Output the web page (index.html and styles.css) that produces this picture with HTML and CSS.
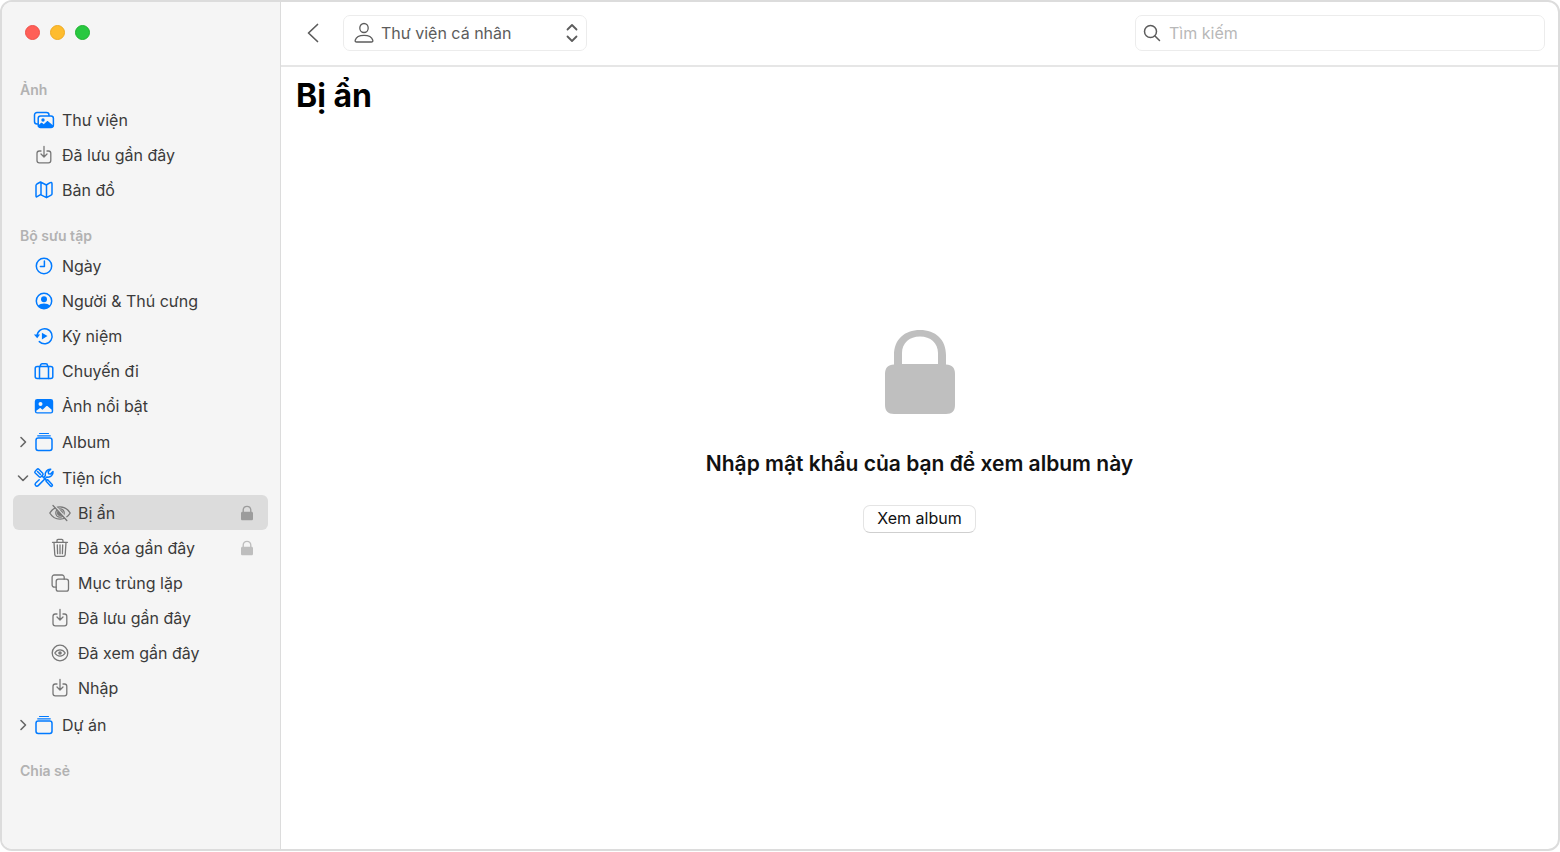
FILE: index.html
```
<!DOCTYPE html>
<html lang="vi">
<head>
    <meta charset="UTF-8">
    <meta name="viewport" content="width=device-width, initial-scale=1.0">
    <title>Bị ẩn</title>
    <link rel="stylesheet" href="styles.css">
</head>
<body>

<!-- icon set -->
<svg class="sprite" aria-hidden="true">
    <symbol id="i-library" viewBox="0 0 22 22">
        <path d="M4.500 15H4a2.500 2.500 0 0 1-2.500-2.500V6A2.500 2.500 0 0 1 4 3.500h9.500A2.500 2.500 0 0 1 16 6v.5"/>
        <rect x="5.200" y="6.900" width="15.200" height="11.600" rx="2.400"/>
        <circle class="fill" cx="10" cy="11" r="1.700"/>
        <path class="fill" d="M5.500 16.300l2.400-2.300c.5-.4.900-.4 1.400 0l1.400 1.200 3-2.800c.5-.5 1.100-.5 1.600 0l4.900 4c0 1.300-.8 2.100-2 2.100H8c-1.500 0-2.500-.9-2.500-2.200z"/>
    </symbol>
    <symbol id="i-import" viewBox="0 0 22 22">
        <path d="M8 7H6.300A2.300 2.300 0 0 0 4 9.300v7.200a2.300 2.300 0 0 0 2.300 2.300h9.200a2.300 2.300 0 0 0 2.300-2.300V9.300A2.300 2.300 0 0 0 15.500 7H14M11 2.500v10.300M8 10l3 3 3-3"/>
    </symbol>
    <symbol id="i-map" viewBox="0 0 22 22">
        <path d="M3 6.500c0-.7.3-1.100.9-1.500l3.600-2 5.800 3 3.400-2.200c1.400-.7 2.300-.3 2.300 1v9.900c0 .7-.3 1.200-.9 1.500l-4.600 2.500-6-3-3.400 2c-.7.4-1.100.1-1.100-.7zM8 3.300v12.400M13.500 6v12.500"/>
    </symbol>
    <symbol id="i-clock" viewBox="0 0 22 22">
        <circle cx="11" cy="11" r="7.700"/>
        <path d="M11.400 6v5.400H7.400"/>
    </symbol>
    <symbol id="i-people" viewBox="0 0 22 22">
        <circle cx="11" cy="11" r="7.700"/>
        <circle class="fill" cx="11" cy="9.300" r="3"/>
        <path class="fill" d="M5 15.800c1.500-1.500 3.500-2.200 6-2.200s4.500.7 6 2.200c-1.500 2-3.500 3-6 3s-4.500-1-6-3z"/>
    </symbol>
    <symbol id="i-memories" viewBox="0 0 22 22">
        <path d="M4.100 11a7.500 7.500 0 1 1 2.200 5.600"/>
        <path class="fill" d="M.9 9.500h6.200L4.200 13.200zM8.900 7.800v6.600l5.600-3.300z"/>
    </symbol>
    <symbol id="i-trips" viewBox="0 0 22 22">
        <rect x="2.200" y="6.500" width="17.600" height="12" rx="2"/>
        <path d="M6.500 6.500v12M15.500 6.500v12M7.500 6.500v-1A1.700 1.700 0 0 1 9.200 3.800h3.600a1.700 1.700 0 0 1 1.700 1.700v1"/>
    </symbol>
    <symbol id="i-photo" viewBox="0 0 22 22">
        <path class="fill" fill-rule="evenodd" d="M4.200 4h13.600a2.400 2.400 0 0 1 2.400 2.400v9.800a2.400 2.400 0 0 1-2.400 2.400H4.200a2.400 2.400 0 0 1-2.400-2.400V6.400A2.400 2.400 0 0 1 4.200 4zM7.500 7a2 2 0 1 0 0 4 2 2 0 0 0 0-4zM3.300 15.800v.5c0 .7.300 1 1 1h13.400c.7 0 1-.3 1-1v-1.500l-4-3.500c-.5-.4-1-.4-1.500 0L9.500 14.800l-1.600-1.400c-.5-.4-1-.4-1.500 0z"/>
    </symbol>
    <symbol id="i-album" viewBox="0 0 22 22">
        <rect x="3" y="7" width="16" height="12.500" rx="2.200"/>
        <path d="M4.700 4.800h12.600M6.500 2.500h9" class="thin"/>
    </symbol>
    <symbol id="i-tools" viewBox="0 0 22 22">
        <path d="M2.200 4.300l1.900-2c.5-.5 1.200-.5 1.700 0l3.900 4c.6.700.6 1.200 0 1.800L8 9.800c-.6.6-1.200.6-1.800 0L2.200 6c-.5-.5-.5-1.200 0-1.700zM4.500 4.500l3 3M9.500 9.500l4 4M13 14c.2-.9.800-1.300 1.700-1.200l4.400 4.600c.5.600.5 1.100 0 1.600s-1 .5-1.600 0z"/>
        <path d="M12.300 8.800c-.4-2 0-3.600 1.200-4.900C14.700 2.600 16.100 2 17.700 2.200L15.200 4.800l.4 1.900 1.900.4 2.500-2.500c.2 1.700-.4 3.100-1.500 4.200-1.300 1.200-2.800 1.600-4.700 1.200l-8.600 8.600c-.8.8-1.900.8-2.600 0s-.7-1.800.1-2.600l3.500-3.200M11 10.100l1.300-1.300"/>
    </symbol>
    <symbol id="i-hidden" viewBox="0 0 22 22">
        <path d="M.8 11C3 7.300 6.700 4.800 11 4.800S19 7.300 21.200 11C19 14.700 15.300 17.200 11 17.200S3 14.700 .8 11z"/>
        <circle cx="11" cy="11" r="4.200"/>
        <circle class="fill" cx="11" cy="11" r="3"/>
        <path class="knock" d="M5.200 3.200L18.500 17.500"/>
        <path d="M4 3.500L17.800 18.500"/>
    </symbol>
    <symbol id="i-trash" viewBox="0 0 22 22">
        <path d="M3.500 5.300h15M8 5V3.700C8 2.900 8.400 2.400 9.200 2.400h3.600c.8 0 1.200.5 1.200 1.300V5M5 5.500l.8 12.100c.1 1.200.7 1.800 1.900 1.800h6.600c1.200 0 1.800-.6 1.900-1.800L17 5.500M8.300 8l.3 8.700M11 8v8.700M13.700 8l-.3 8.700"/>
    </symbol>
    <symbol id="i-copies" viewBox="0 0 22 22">
        <rect x="7.200" y="7.200" width="12.300" height="12" rx="2.200"/>
        <path d="M7.200 15.200H5.300A2.200 2.200 0 0 1 3.100 13V5.200A2.200 2.200 0 0 1 5.300 3H13a2.200 2.200 0 0 1 2.200 2.200v2"/>
    </symbol>
    <symbol id="i-viewed" viewBox="0 0 22 22">
        <circle cx="11" cy="11" r="7.800"/>
        <path d="M5.800 11c1.300-2 3-3.100 5.200-3.100s3.900 1.100 5.200 3.100c-1.300 2-3 3.100-5.200 3.100S7.100 13 5.800 11z"/>
        <circle class="fill" cx="11" cy="11" r="1.800"/>
    </symbol>
    <symbol id="i-lock" viewBox="0 0 70 84">
        <path class="fill" fill-rule="evenodd" d="M9 34.500V25C9 9.500 19.500 0 35 0s26 9.500 26 25v9.500c6 0 9 3.500 9 9.500v31c0 6-3 9-9 9H9c-6 0-9-3-9-9V44c0-6 3-9.500 9-9.500zM17 34h36V23C53 13 45.500 6.500 35 6.500S17 13 17 23z"/>
    </symbol>
    <symbol id="i-person" viewBox="0 0 22 22">
        <ellipse cx="11" cy="6" rx="4.200" ry="4.500"/>
        <path d="M3.700 20c-1.200 0-1.800-.6-1.500-1.700.9-3 4.300-4.900 8.800-4.900s7.900 1.900 8.800 4.900c.3 1.100-.3 1.700-1.500 1.700z"/>
    </symbol>
    <symbol id="i-updown" viewBox="0 0 12 22">
        <path d="M1.500 7.500L6 3l4.500 4.500M1.500 14.500L6 19l4.500-4.500"/>
    </symbol>
    <symbol id="i-back" viewBox="0 0 14 22">
        <path d="M11.500 2.500L2.500 11l9 8.500"/>
    </symbol>
    <symbol id="i-search" viewBox="0 0 20 20">
        <circle cx="8.500" cy="8.500" r="6"/>
        <path d="M13 13l4.500 4.500"/>
    </symbol>
    <symbol id="i-chevron" viewBox="0 0 12 12">
        <path d="M4 1.500L8.500 6 4 10.500"/>
    </symbol>
</svg>

<div class="window">

    <nav class="sidebar" aria-label="Thanh bên">
        <div class="lights">
            <button class="light close" aria-label="Đóng"></button>
            <button class="light minimize" aria-label="Thu nhỏ"></button>
            <button class="light zoom" aria-label="Phóng to"></button>
        </div>

        <h2>Ảnh</h2>
        <ul>
            <li class="row"><a href="#"><svg class="icon"><use href="#i-library"/></svg>Thư viện</a></li>
            <li class="row"><a href="#"><svg class="icon gray"><use href="#i-import"/></svg>Đã lưu gần đây</a></li>
            <li class="row"><a href="#"><svg class="icon"><use href="#i-map"/></svg>Bản đồ</a></li>
        </ul>

        <h2>Bộ sưu tập</h2>
        <ul>
            <li class="row"><a href="#"><svg class="icon"><use href="#i-clock"/></svg>Ngày</a></li>
            <li class="row"><a href="#"><svg class="icon"><use href="#i-people"/></svg>Người &amp; Thú cưng</a></li>
            <li class="row"><a href="#"><svg class="icon"><use href="#i-memories"/></svg>Kỷ niệm</a></li>
            <li class="row"><a href="#"><svg class="icon"><use href="#i-trips"/></svg>Chuyến đi</a></li>
            <li class="row"><a href="#"><svg class="icon"><use href="#i-photo"/></svg>Ảnh nổi bật</a></li>
            <li class="group">
                <div class="row">
                    <button class="toggle" aria-expanded="false" aria-label="Mở Album"><svg><use href="#i-chevron"/></svg></button>
                    <a href="#"><svg class="icon"><use href="#i-album"/></svg>Album</a>
                </div>
            </li>
            <li class="group">
                <div class="row">
                    <button class="toggle" aria-expanded="true" aria-label="Đóng Tiện ích"><svg><use href="#i-chevron"/></svg></button>
                    <a href="#"><svg class="icon"><use href="#i-tools"/></svg>Tiện ích</a>
                </div>
                <ul class="sub">
                    <li class="row selected"><a href="#" aria-current="page"><svg class="icon gray"><use href="#i-hidden"/></svg>Bị ẩn<svg class="lock"><use href="#i-lock"/></svg></a></li>
                    <li class="row"><a href="#"><svg class="icon gray"><use href="#i-trash"/></svg>Đã xóa gần đây<svg class="lock"><use href="#i-lock"/></svg></a></li>
                    <li class="row"><a href="#"><svg class="icon gray"><use href="#i-copies"/></svg>Mục trùng lặp</a></li>
                    <li class="row"><a href="#"><svg class="icon gray"><use href="#i-import"/></svg>Đã lưu gần đây</a></li>
                    <li class="row"><a href="#"><svg class="icon gray"><use href="#i-viewed"/></svg>Đã xem gần đây</a></li>
                    <li class="row"><a href="#"><svg class="icon gray"><use href="#i-import"/></svg>Nhập</a></li>
                </ul>
            </li>
            <li class="group">
                <div class="row">
                    <button class="toggle" aria-expanded="false" aria-label="Mở Dự án"><svg><use href="#i-chevron"/></svg></button>
                    <a href="#"><svg class="icon"><use href="#i-album"/></svg>Dự án</a>
                </div>
            </li>
        </ul>

        <h2>Chia sẻ</h2>
    </nav>

    <div class="content">
        <header class="toolbar">
            <button class="back" aria-label="Quay lại"><svg><use href="#i-back"/></svg></button>
            <div class="field library">
                <svg class="person"><use href="#i-person"/></svg>
                <select aria-label="Thư viện">
                    <option>Thư viện cá nhân</option>
                </select>
                <svg class="updown"><use href="#i-updown"/></svg>
            </div>
            <label class="field search">
                <svg><use href="#i-search"/></svg>
                <input type="search" placeholder="Tìm kiếm" aria-label="Tìm kiếm">
            </label>
        </header>

        <main>
            <h1>Bị ẩn</h1>
            <div class="locked">
                <svg class="big-lock"><use href="#i-lock"/></svg>
                <p>Nhập mật khẩu của bạn để xem album này</p>
                <button class="view">Xem album</button>
            </div>
        </main>
    </div>

</div>

</body>
</html>
```
FILE: styles.css
```
* {
    box-sizing: border-box;
}
body {
    margin: 0;
    padding-bottom: 1px;
    background-color: #fff;
    color: #3b3b3b;
    font-family: Inter, "Noto Sans", sans-serif;
    font-size: 16px;
    line-height: 20px;
}
ul {
    list-style: none;
    margin: 0;
    padding: 0;
}
button, select, input {
    font: inherit;
    color: inherit;
    background: none;
    border: none;
    margin: 0;
    padding: 0;
}
svg {
    display: block;
    flex: none;
    fill: none;
    stroke: currentColor;
    stroke-width: 1.5;
    stroke-linecap: round;
    stroke-linejoin: round;
}
.sprite {
    position: absolute;
    width: 0;
    height: 0;
}
.fill {
    fill: currentColor;
    stroke: none;
}
.thin {
    stroke-width: 1.2;
}
.knock {
    stroke: #dcdcdc;
    stroke-width: 1.6;
}
.window {
    display: flex;
    min-height: calc(100vh - 1px);
    border: 2px solid #dcdcdc;
    border-radius: 12px;
    overflow: hidden;
}

/* sidebar */
.sidebar {
    flex: none;
    width: 279px;
    padding: 23px 12px 24px 11px;
    background-color: #f5f5f5;
    border-right: 1px solid #dcdcdc;
}
.lights {
    display: flex;
    gap: 10px;
    padding-left: 12px;
    margin-bottom: 40px;
}
.light {
    width: 15px;
    height: 15px;
    border-radius: 50%;
}
.close {
    background-color: #ff5f57;
    border: 1px solid #ee514a;
}
.minimize {
    background-color: #febc2e;
    border: 1px solid #eeaa22;
}
.zoom {
    background-color: #28c840;
    border: 1px solid #1fb32f;
}
.sidebar h2 {
    margin: 0;
    padding: 0 7px 2px;
    font-size: 14px;
    font-weight: 600;
    line-height: 20px;
    color: #b2b2b2;
}
.sidebar ul + h2 {
    margin-top: 19px;
}
.row {
    display: flex;
    align-items: center;
    height: 35px;
    padding-left: 20px;
    border-radius: 6px;
}
.row a {
    flex: 1;
    display: flex;
    align-items: center;
    gap: 7px;
    color: inherit;
    text-decoration: none;
}
.group {
    margin-top: 1px;
}
.group > .row {
    padding-left: 4px;
}
.sub {
    padding-bottom: 1px;
}
.sub .row {
    padding-left: 36px;
}
.selected {
    background-color: #dcdcdc;
}
.icon {
    width: 22px;
    height: 22px;
    color: #007aff;
}
.icon.gray {
    color: #777;
    stroke-width: 1.3;
}
.lock {
    width: 12px;
    height: 16px;
    margin-left: auto;
    margin-right: 15px;
    color: #bebebe;
}
.selected .lock {
    color: #9c9c9c;
}
.toggle {
    width: 12px;
    height: 12px;
    margin-right: 4px;
    color: #666;
}
.toggle svg {
    width: 12px;
    height: 12px;
    stroke-width: 1.6;
}
.toggle[aria-expanded="true"] svg {
    transform: rotate(90deg);
}

/* main area */
.content {
    flex: 1;
    display: flex;
    flex-direction: column;
    min-width: 0;
}
.toolbar {
    display: flex;
    align-items: center;
    height: 65px;
    padding: 0 13px 2px 25px;
    border-bottom: 2px solid #e6e6e6;
    color: #5c5c5c;
}
.back {
    margin-right: 23px;
}
.back svg {
    width: 14px;
    height: 22px;
    stroke-width: 1.7;
}
.field {
    display: flex;
    align-items: center;
    height: 36px;
    border: 1px solid #ececec;
    border-radius: 7px;
}
.library {
    width: 244px;
    padding: 0 8px 0 9px;
}
.person {
    width: 22px;
    height: 22px;
    margin-right: 6px;
    stroke-width: 1.3;
}
.library select {
    flex: 1;
    min-width: 0;
    appearance: none;
    outline: none;
}
.updown {
    width: 12px;
    height: 22px;
    stroke-width: 1.8;
}
.search {
    flex: 0 1 410px;
    margin-left: auto;
    padding: 0 6px;
}
.search svg {
    width: 20px;
    height: 20px;
    margin-right: 7px;
}
.search input {
    flex: 1;
    min-width: 0;
    outline: none;
}
.search input::placeholder {
    color: #b8b8b8;
}
main {
    flex: 1;
    display: flex;
    flex-direction: column;
}
h1 {
    margin: 0;
    padding: 9px 15px;
    font-size: 32px;
    font-weight: 700;
    line-height: 40px;
    color: #000;
}
.locked {
    flex: 1;
    display: flex;
    flex-direction: column;
    align-items: center;
    justify-content: center;
    padding-bottom: 112px;
    color: #111;
}
.big-lock {
    width: 70px;
    height: 84px;
    color: #bfbfbf;
}
.locked p {
    margin: 35px 16px 26px;
    font-size: 21px;
    font-weight: 600;
    line-height: 30px;
    text-align: center;
}
.view {
    height: 28px;
    padding: 0 13px 2px;
    background-color: #fff;
    border: 1px solid #e4e4e4;
    border-bottom-color: #cfcfcf;
    border-radius: 7px;
    color: #111;
}
```
